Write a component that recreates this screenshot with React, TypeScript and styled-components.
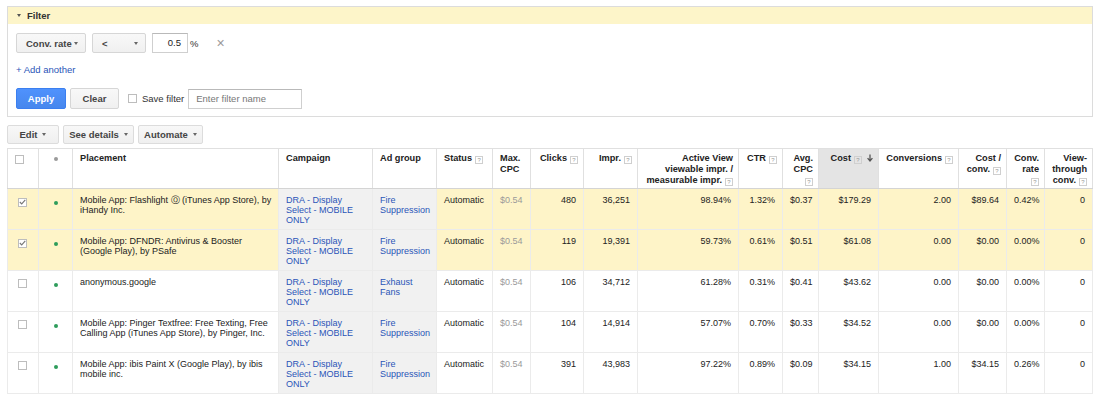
import React from "react";
import styled, { createGlobalStyle } from "styled-components";

const GlobalStyle = createGlobalStyle`
  body {
    margin: 0;
    background: #fff;
    font-family: "Liberation Sans", Arial, sans-serif;
    color: #222;
  }
`;

const Page = styled.div`
  padding: 6px 0 0 7px;
  width: 1086px;
`;

/* ---------- filter panel ---------- */

const FilterPanel = styled.section`
  box-sizing: border-box;
  height: 111px;
  border: 1px solid #dcdcdc;
`;

const FilterHeader = styled.div`
  display: flex;
  align-items: center;
  gap: 6px;
  height: 17px;
  padding-left: 9px;
  background: #fdf5c9;
  font-size: 9.5px;
  font-weight: bold;
  color: #333;
`;

const Caret = styled.span<{ $color?: string }>`
  display: inline-block;
  width: 0;
  height: 0;
  border-left: 2.5px solid transparent;
  border-right: 2.5px solid transparent;
  border-top: 3px solid ${(p) => p.$color || "#666"};
`;

const FilterBody = styled.div`
  padding: 9px 8px 0 8px;
`;

const Row = styled.div<{ $gap?: number; $top?: number }>`
  display: flex;
  align-items: center;
  gap: ${(p) => p.$gap ?? 6}px;
  margin-top: ${(p) => p.$top ?? 0}px;
`;

const Dropdown = styled.button<{ $w: number }>`
  box-sizing: border-box;
  display: flex;
  align-items: center;
  justify-content: space-between;
  width: ${(p) => p.$w}px;
  height: 20px;
  padding: 0 7px 0 9px;
  border: 1px solid #d6d6d6;
  border-radius: 2px;
  background: linear-gradient(#f8f8f8, #f0f0f0);
  font-family: inherit;
  font-size: 9.5px;
  font-weight: bold;
  color: #444;
  white-space: nowrap;
`;

const TextInput = styled.div<{ $w: number; $right?: boolean; $placeholder?: boolean }>`
  box-sizing: border-box;
  width: ${(p) => p.$w}px;
  height: 20px;
  padding: 0 6px 0 7px;
  border: 1px solid #cfcfcf;
  border-top-color: #b9b9b9;
  background: #fff;
  font-size: 9.5px;
  line-height: 18px;
  text-align: ${(p) => (p.$right ? "right" : "left")};
  color: ${(p) => (p.$placeholder ? "#777" : "#222")};
`;

const Unit = styled.span`
  font-size: 9.5px;
  color: #333;
  margin-left: -4px;
`;

const Remove = styled.span`
  margin-left: 12px;
  font-size: 14px;
  color: #999;
  line-height: 1;
`;

const AddLink = styled.a`
  display: block;
  margin-top: 12px;
  font-size: 9.5px;
  line-height: 10px;
  color: #2a55b8;
  text-decoration: none;
`;

const ActionButton = styled.button<{ $primary?: boolean; $w: number }>`
  box-sizing: border-box;
  width: ${(p) => p.$w}px;
  height: 21px;
  border-radius: 2px;
  border: 1px solid ${(p) => (p.$primary ? "#3b7ff0" : "#d6d6d6")};
  background: ${(p) =>
    p.$primary ? "linear-gradient(#4f92fd, #4787ed)" : "linear-gradient(#f8f8f8, #f0f0f0)"};
  color: ${(p) => (p.$primary ? "#fff" : "#444")};
  font-family: inherit;
  font-size: 9.5px;
  font-weight: bold;
`;

const Box = styled.span<{ $size?: number }>`
  box-sizing: border-box;
  display: inline-flex;
  align-items: center;
  justify-content: center;
  width: ${(p) => p.$size ?? 9}px;
  height: ${(p) => p.$size ?? 9}px;
  border: 1px solid #bdbdbd;
  background: #fff;
`;

const Label = styled.span`
  font-size: 9.5px;
  color: #333;
`;

/* ---------- toolbar ---------- */

const Toolbar = styled.div`
  display: flex;
  gap: 4px;
  margin-top: 8px;
`;

const ToolButton = styled.button<{ $w: number }>`
  box-sizing: border-box;
  display: flex;
  align-items: center;
  justify-content: center;
  gap: 5px;
  width: ${(p) => p.$w}px;
  height: 19px;
  padding: 0;
  border: 1px solid #dcdcdc;
  border-radius: 2px;
  background: linear-gradient(#f8f8f8, #efefef);
  font-family: inherit;
  font-size: 9.5px;
  font-weight: bold;
  color: #444;
  white-space: nowrap;
`;

/* ---------- table ---------- */

const Table = styled.table`
  margin-top: 4px;
  width: 1086px;
  table-layout: fixed;
  border-collapse: collapse;
  border: 1px solid #dadada;
`;

const Col = styled.col<{ $w: number }>`
  width: ${(p) => p.$w}px;
`;

const HeadRow = styled.tr`
  height: 40px;
`;

const Th = styled.th<{ $right?: boolean; $sorted?: boolean }>`
  vertical-align: top;
  padding: 4px ${(p) => (p.$right ? 5 : 6)}px 0 7px;
  border: 1px solid #e0e0e0;
  border-bottom-color: #d4d4d4;
  background: ${(p) => (p.$sorted ? "#e4e4e4" : "#fff")};
  text-align: ${(p) => (p.$right ? "right" : "left")};
  font-size: 9.2px;
  line-height: 11px;
  font-weight: bold;
  color: #222;
`;

const Help = styled.span`
  box-sizing: border-box;
  display: inline-block;
  width: 8px;
  height: 8px;
  margin-left: 3px;
  border: 1px solid #cfcfcf;
  font-size: 6px;
  line-height: 6px;
  text-align: center;
  font-weight: normal;
  color: #999;
  vertical-align: -1px;
`;

const SortArrow = styled.svg`
  margin-left: 5px;
  vertical-align: -1px;
`;

const BodyRow = styled.tr<{ $selected?: boolean }>`
  height: 41px;
  background: ${(p) => (p.$selected ? "#fef4c8" : "#fff")};
`;

const Td = styled.td<{ $right?: boolean; $gray?: boolean }>`
  vertical-align: top;
  padding: 6px ${(p) => (p.$right ? 7 : 6)}px 0 7px;
  border: 1px solid #ebebeb;
  background: ${(p) => (p.$gray ? "#f1f1f1" : "transparent")};
  text-align: ${(p) => (p.$right ? "right" : "left")};
  font-size: 9px;
  line-height: 10px;
  color: #222;
`;

const CheckCell = styled(Td)`
  padding: 8px 0 0 10px;
`;

const DotCell = styled(Td)`
  padding: 12px 0 0 0;
`;

const HeadMark = styled.div<{ $top: number }>`
  padding-top: ${(p) => p.$top}px;
`;

const Dot = styled.span<{ $color: string }>`
  display: block;
  width: 4px;
  height: 4px;
  margin: 0 auto;
  border-radius: 50%;
  background: ${(p) => p.$color};
`;

const Link = styled.a`
  color: #2a55b8;
  text-decoration: none;
`;

const Muted = styled.span`
  color: #9a9a9a;
`;

type Data = {
  sel: boolean;
  placement: string;
  adGroup: string;
  clicks: string;
  impr: string;
  av: string;
  ctr: string;
  cpc: string;
  cost: string;
  conv: string;
  cpa: string;
  rate: string;
  vt: string;
};

const rows: Data[] = [
  {
    sel: true,
    placement: "Mobile App: Flashlight Ⓞ (iTunes App Store), by iHandy Inc.",
    adGroup: "Fire Suppression",
    clicks: "480",
    impr: "36,251",
    av: "98.94%",
    ctr: "1.32%",
    cpc: "$0.37",
    cost: "$179.29",
    conv: "2.00",
    cpa: "$89.64",
    rate: "0.42%",
    vt: "0",
  },
  {
    sel: true,
    placement: "Mobile App: DFNDR: Antivirus & Booster (Google Play), by PSafe",
    adGroup: "Fire Suppression",
    clicks: "119",
    impr: "19,391",
    av: "59.73%",
    ctr: "0.61%",
    cpc: "$0.51",
    cost: "$61.08",
    conv: "0.00",
    cpa: "$0.00",
    rate: "0.00%",
    vt: "0",
  },
  {
    sel: false,
    placement: "anonymous.google",
    adGroup: "Exhaust Fans",
    clicks: "106",
    impr: "34,712",
    av: "61.28%",
    ctr: "0.31%",
    cpc: "$0.41",
    cost: "$43.62",
    conv: "0.00",
    cpa: "$0.00",
    rate: "0.00%",
    vt: "0",
  },
  {
    sel: false,
    placement:
      "Mobile App: Pinger Textfree: Free Texting, Free Calling App (iTunes App Store), by Pinger, Inc.",
    adGroup: "Fire Suppression",
    clicks: "104",
    impr: "14,914",
    av: "57.07%",
    ctr: "0.70%",
    cpc: "$0.33",
    cost: "$34.52",
    conv: "0.00",
    cpa: "$0.00",
    rate: "0.00%",
    vt: "0",
  },
  {
    sel: false,
    placement: "Mobile App: ibis Paint X (Google Play), by ibis mobile inc.",
    adGroup: "Fire Suppression",
    clicks: "391",
    impr: "43,983",
    av: "97.22%",
    ctr: "0.89%",
    cpc: "$0.09",
    cost: "$34.15",
    conv: "1.00",
    cpa: "$34.15",
    rate: "0.26%",
    vt: "0",
  },
];

const widths = [31, 34, 206, 94, 64, 56, 38, 53, 54, 101, 44, 36, 60, 80, 48, 38, 48];

function Check({ checked }: { checked?: boolean }) {
  return (
    <Box>
      {checked && (
        <svg width="7" height="6" viewBox="0 0 7 6">
          <path d="M0.8 3 L2.7 4.9 L6.3 0.8" fill="none" stroke="#777" strokeWidth="1.1" />
        </svg>
      )}
    </Box>
  );
}

function Q() {
  return <Help>?</Help>;
}

export default function App() {
  return (
    <Page>
      <GlobalStyle />
      <FilterPanel>
        <FilterHeader>
          <Caret $color="#555" />
          Filter
        </FilterHeader>
        <FilterBody>
          <Row>
            <Dropdown $w={70}>
              Conv. rate <Caret />
            </Dropdown>
            <Dropdown $w={54}>
              &lt; <Caret />
            </Dropdown>
            <TextInput $w={36} $right>
              0.5
            </TextInput>
            <Unit>%</Unit>
            <Remove>×</Remove>
          </Row>
          <AddLink>+ Add another</AddLink>
          <Row $gap={4} $top={13}>
            <ActionButton $primary $w={50}>
              Apply
            </ActionButton>
            <ActionButton $w={49}>Clear</ActionButton>
            <Row $gap={5}>
              <span />
              <Check />
              <Label>Save filter</Label>
            </Row>
            <TextInput $w={114} $placeholder>
              Enter filter name
            </TextInput>
          </Row>
        </FilterBody>
      </FilterPanel>

      <Toolbar>
        <ToolButton $w={52}>
          Edit <Caret />
        </ToolButton>
        <ToolButton $w={71}>
          See details <Caret />
        </ToolButton>
        <ToolButton $w={65}>
          Automate <Caret />
        </ToolButton>
      </Toolbar>

      <Table>
        <colgroup>
          {widths.map((w, i) => (
            <Col key={i} $w={w} />
          ))}
        </colgroup>
        <thead>
          <HeadRow>
            <Th>
              <HeadMark $top={2}>
                <Check />
              </HeadMark>
            </Th>
            <Th>
              <HeadMark $top={4}>
                <Dot $color="#9a9a9a" />
              </HeadMark>
            </Th>
            <Th>Placement</Th>
            <Th>Campaign</Th>
            <Th>Ad group</Th>
            <Th>
              Status<Q />
            </Th>
            <Th>
              Max.
              <br />
              CPC
            </Th>
            <Th $right>
              Clicks<Q />
            </Th>
            <Th $right>
              Impr.<Q />
            </Th>
            <Th $right>
              Active View
              <br />
              viewable impr. /
              <br />
              measurable impr.<Q />
            </Th>
            <Th $right>
              CTR<Q />
            </Th>
            <Th $right>
              Avg.
              <br />
              CPC
              <br />
              <Q />
            </Th>
            <Th $right $sorted>
              Cost<Q />
              <SortArrow width="6" height="8" viewBox="0 0 6 8">
                <path d="M3 0.5 V6.5 M0.6 4.2 L3 7 L5.4 4.2" fill="none" stroke="#555" strokeWidth="1.3" />
              </SortArrow>
            </Th>
            <Th $right>
              Conversions<Q />
            </Th>
            <Th $right>
              Cost /
              <br />
              conv.<Q />
            </Th>
            <Th $right>
              Conv.
              <br />
              rate
              <br />
              <Q />
            </Th>
            <Th $right>
              View-
              <br />
              through
              <br />
              conv.<Q />
            </Th>
          </HeadRow>
        </thead>
        <tbody>
          {rows.map((r, i) => (
            <BodyRow key={i} $selected={r.sel}>
              <CheckCell>
                <Check checked={r.sel} />
              </CheckCell>
              <DotCell>
                <Dot $color="#2e9c5b" />
              </DotCell>
              <Td>{r.placement}</Td>
              <Td $gray>
                <Link>DRA - Display Select - MOBILE ONLY</Link>
              </Td>
              <Td $gray>
                <Link>{r.adGroup}</Link>
              </Td>
              <Td>Automatic</Td>
              <Td>
                <Muted>$0.54</Muted>
              </Td>
              <Td $right>{r.clicks}</Td>
              <Td $right>{r.impr}</Td>
              <Td $right>{r.av}</Td>
              <Td $right>{r.ctr}</Td>
              <Td $right>{r.cpc}</Td>
              <Td $right>{r.cost}</Td>
              <Td $right>{r.conv}</Td>
              <Td $right>{r.cpa}</Td>
              <Td $right>{r.rate}</Td>
              <Td $right>{r.vt}</Td>
            </BodyRow>
          ))}
        </tbody>
      </Table>
    </Page>
  );
}
